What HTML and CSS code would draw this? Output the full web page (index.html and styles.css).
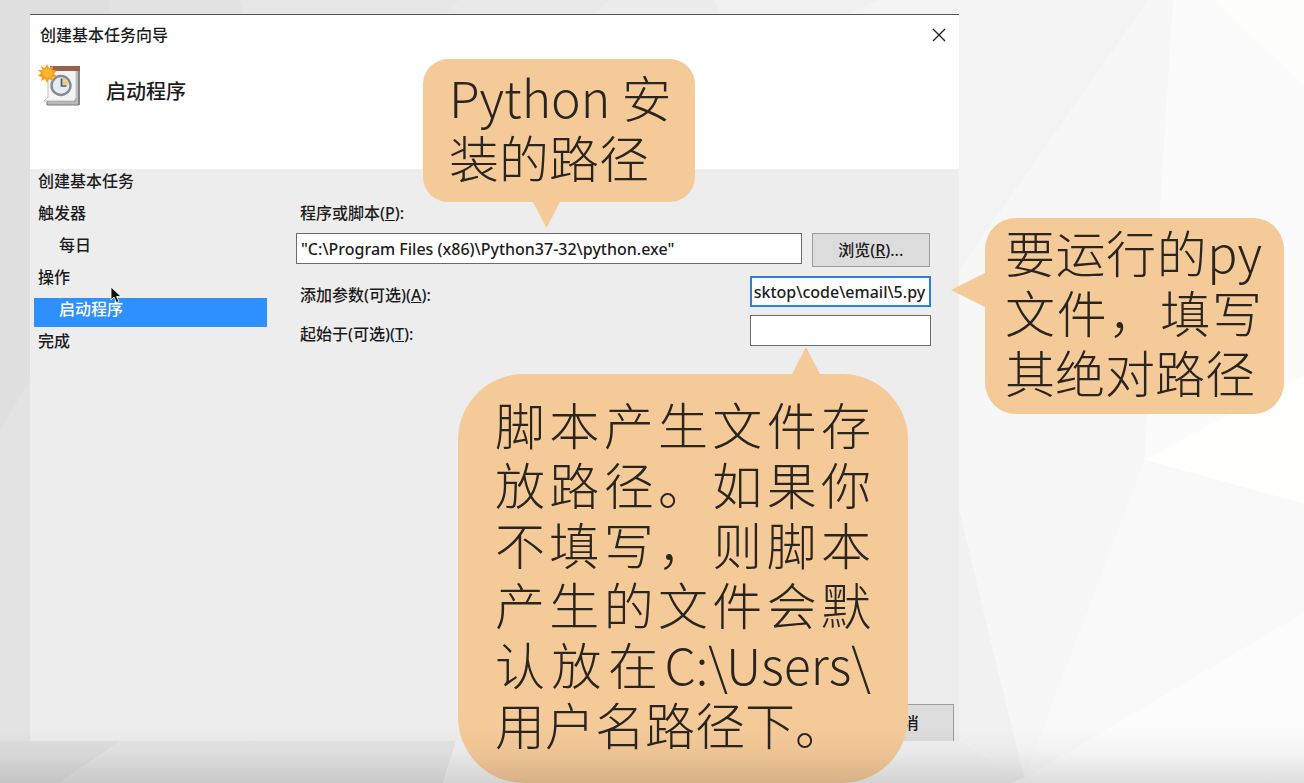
FILE: index.html
```html
<!DOCTYPE html>
<html lang="zh-CN">
<head>
<meta charset="utf-8">
<title>创建基本任务向导</title>
<link rel="stylesheet" href="styles.css">
</head>
<body>
<main class="stage">
  <svg class="backdrop" viewBox="0 0 1304 783" preserveAspectRatio="none" aria-hidden="true">
    <rect width="1304" height="783" fill="#f3f3f3"/>
    <path d="M0 0H250L300 400L120 741L60 783H0Z" fill="#dfdfdf"/>
    <path d="M0 430L30 380V741H0Z" fill="#e3e3e3"/>
    <path d="M108 0H245V20H112Z" fill="#e2e2e2"/>
    <path d="M240 0H460L440 20H245Z" fill="#e6e6e6"/>
    <path d="M460 0H610L590 20H440Z" fill="#e9e9e9"/>
    <path d="M610 0H715L722 20H590Z" fill="#ececec"/>
    <path d="M715 0H880L830 20H722Z" fill="#f0f0f0"/>
    <path d="M120 741H456L443 783H60Z" fill="#e5e5e5"/>
    <path d="M456 741H959L1024 778L1010 783H443Z" fill="#f0f0f0"/>
    <path d="M1148 0L959 270V510L1024 778L1144 460L1173 0Z" fill="#f7f7f7"/>
    <path d="M959 510L1024 778L959 738Z" fill="#f1f1f1"/>
    <path d="M1173 0H1304V420L1144 460Z" fill="#fbfbfb"/>
    <path d="M1215 0H1304V85Z" fill="#fdfdfc"/>
    <path d="M1144 460L1304 375V504Z" fill="#fefefd"/>
    <path d="M1144 460L1304 504V612L1024 778Z" fill="#f9f9f9"/>
    <path d="M1304 612V783H1010L1024 778Z" fill="#fcfcfc"/>
  </svg>

  <section class="dialog" aria-label="创建基本任务向导">
    <header class="dialog-head">
      <div class="titlebar">
        <span>创建基本任务向导</span>
        <button class="close" type="button" aria-label="关闭">
          <svg viewBox="0 0 14 14" width="14" height="14"><path d="M1 1L13 13M13 1L1 13" stroke="#222" stroke-width="1.4" fill="none"/></svg>
        </button>
      </div>
      <div class="heading">
        <svg class="task-icon" viewBox="0 0 44 44" width="44" height="44" aria-hidden="true">
          <path d="M9 37H37V6H41V41H9Z" fill="#b9b9b9" stroke="#7d7d7d"/>
          <path d="M10 5H38V34L36 37H6L10 33Z" fill="#f4f4f4" stroke="#c4c4c4"/>
          <path d="M12 2H42V7H12Z" fill="#9a604d"/>
          <path d="M41 7V41" stroke="#777" stroke-width="1.500"/>
          <circle cx="23" cy="21.500" r="9.500" fill="#e3ebf3" stroke="#858b92" stroke-width="2.4"/>
          <path d="M24 21V13.500A8 8 0 0 1 30.500 21Z" fill="#f2ce80"/>
          <path d="M23.500 14.500V22H28.500" fill="none" stroke="#3f5f84" stroke-width="1.700"/>
          <path d="M9 0L11 4L15 1.500L14.500 6L19 6.500L16 9.500L19 13L14.500 13L15 17.500L11 15L9 19L7 15L3 17L4 13L0 12L3 9L0 6L4.500 6L3 2L7 4Z" fill="#f5a21b"/>
          <circle cx="9.500" cy="9" r="4.500" fill="#ffb735"/>
        </svg>
        <h1>启动程序</h1>
      </div>
    </header>

    <div class="dialog-body">
      <nav class="steps" aria-label="步骤">
        <a href="#">创建基本任务</a>
        <a href="#">触发器</a>
        <a class="sub" href="#">每日</a>
        <a href="#">操作</a>
        <a class="sub current" href="#" aria-current="step">启动程序</a>
        <a href="#">完成</a>
      </nav>
      <form class="fields">
        <label for="program">程序或脚本(<u>P</u>):</label>
        <div class="row program-row">
          <input id="program" type="text" value="&quot;C:\Program Files (x86)\Python37-32\python.exe&quot;">
          <button class="btn browse" type="button">浏览(<u>R</u>)...</button>
        </div>
        <div class="row">
          <label for="args">添加参数(可选)(<u>A</u>):</label>
          <input id="args" class="short active" type="text" value="sktop\code\email\5.py">
        </div>
        <div class="row">
          <label for="startin">起始于(可选)(<u>T</u>):</label>
          <input id="startin" class="short" type="text">
        </div>
      </form>
    </div>
    <footer class="dialog-foot"><button class="btn cancel" type="button">取消</button></footer>
    <svg class="cursor" viewBox="0 0 12 18" width="12" height="18" aria-hidden="true"><path d="M1 1V14L4 11L6.500 16.500L9 15.500L6.500 10.500H11Z" fill="#111" stroke="#fff" stroke-width=".8"/></svg>
  </section>

  <p class="callout callout-program">Python 安装的路径</p>
  <p class="callout callout-args">要运行的py文件，填写其绝对路径</p>
  <p class="callout callout-start">脚本产生文件存放路径。如果你不填写，则脚本产生的文件会默认放在C:\Users\<wbr>用户名路径下。</p>
</main>
<script src="script.js"></script>
</body>
</html>
```
FILE: styles.css
```css
* { box-sizing: border-box; }

body {
  margin: 0;
  color: #1c1c1c;
  font: 500 16px/24px "Noto Sans", "Noto Sans CJK SC", sans-serif;
}

.stage {
  position: relative;
  display: flex;
  min-height: 100vh;
  padding: 14px 0 42px 30px;
  overflow: hidden;
}

.stage::after {
  content: "";
  position: absolute;
  inset: auto 0 0;
  height: 56px;
  background: linear-gradient(rgba(0, 0, 0, 0), rgba(0, 0, 0, .03) 45%, rgba(0, 0, 0, .12));
  pointer-events: none;
}

.backdrop {
  position: absolute;
  inset: 0;
  width: 100%;
  height: 100%;
}

.dialog {
  position: relative;
  display: flex;
  flex-direction: column;
  width: 72.9%;
  border-top: 1px solid #555;
  background: #ededed;
}

.dialog-head {
  min-height: 154px;
  background: #fff;
}

.titlebar {
  display: flex;
  justify-content: space-between;
  align-items: center;
  padding: 8px 13px 0 10px;
}

.close {
  display: flex;
  padding: 0;
  border: 0;
  background: none;
}

.heading {
  display: flex;
  align-items: center;
  gap: 24px;
  padding: 17px 8px 0;
}

h1 {
  margin: 12px 0 0;
  font-size: 20px;
  font-weight: 500;
  line-height: 28px;
}

.dialog-body {
  display: flex;
  flex: 1;
  gap: 29px;
  padding: 0 28px 0 4px;
}

.steps {
  display: flex;
  flex-direction: column;
  flex: 0 0 233px;
  gap: 3px;
  padding-top: 1px;
}

.steps a {
  padding: 0 4px 6px;
  color: inherit;
  line-height: 23px;
  text-decoration: none;
}

.steps .sub { padding-left: 25px; }

.steps .current {
  background: #2e8fff;
  color: #fff;
}

.fields {
  display: flex;
  flex: 1;
  flex-direction: column;
  gap: 8px;
  padding-top: 32px;
}

label { padding-left: 4px; }

.row {
  display: flex;
  justify-content: space-between;
  align-items: center;
}

.row label { padding-top: 6px; }

.program-row {
  align-items: flex-start;
  gap: 10px;
  margin-bottom: 1px;
  padding-right: 1px;
}

input {
  flex: 1;
  min-width: 0;
  height: 31px;
  padding: 0 4px;
  border: 1px solid #6c6c6c;
  background: #fff;
  color: inherit;
  font: inherit;
}

.short {
  flex: 0 0 181px;
  padding: 0 2px;
}

.active {
  border: 2px solid #2f7fd6;
  outline: 0;
}

.btn {
  height: 34px;
  border: 1px solid #9c9c9c;
  background: #dcdcdc;
  color: inherit;
  font: inherit;
}

.browse { width: 118px; }

.dialog-foot {
  display: flex;
  justify-content: flex-end;
  padding-right: 5px;
}

.cancel {
  width: 102px;
  height: 37px;
  border-bottom: 0;
}

.cursor {
  position: absolute;
  left: 80px;
  top: 271px;
}

.callout {
  position: absolute;
  margin: 0;
  background: #f5ca99;
  color: #2b251f;
  font: 300 50px/60px "Noto Sans CJK SC", sans-serif;
  text-align: justify;
}

.callout::before {
  content: "";
  position: absolute;
  background: inherit;
}

.callout-program {
  left: 423px;
  top: 59px;
  width: 272px;
  padding: 7px 20px 16px 26px;
  border-radius: 25px;
  text-align: left;
}

.callout-program::before {
  left: 110px;
  top: 100%;
  width: 27px;
  height: 26px;
  clip-path: polygon(0 0, 100% 0, 50% 100%);
}

.callout-args {
  left: 985px;
  top: 218px;
  width: 299px;
  padding: 3px 22px 13px 20px;
  border-radius: 31px;
}

.callout-args::before {
  right: 100%;
  top: 55px;
  width: 34px;
  height: 34px;
  clip-path: polygon(100% 0, 100% 100%, 0 50%);
}

.callout-start {
  left: 458px;
  top: 374px;
  width: 450px;
  padding: 19px 37px 30px;
  border-radius: 66px;
}

.callout-start::before {
  left: 334px;
  bottom: 100%;
  width: 28px;
  height: 27px;
  clip-path: polygon(0 100%, 100% 100%, 50% 0);
}
```
FILE: script.js
```js
const args = document.getElementById("args");
args.scrollLeft = args.scrollWidth;
```
